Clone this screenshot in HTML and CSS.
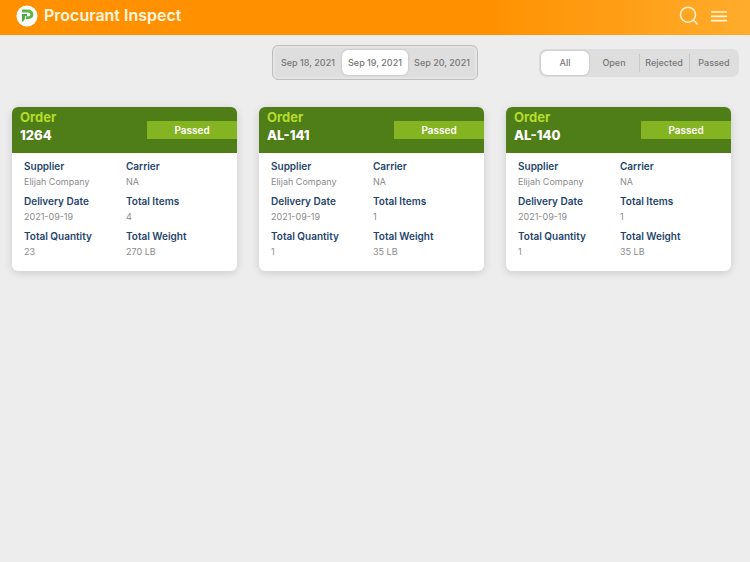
FILE: index.html
```html
<!DOCTYPE html>
<html lang="en">
<head>
  <meta charset="UTF-8">
  <meta name="viewport" content="width=device-width, initial-scale=1.0">
  <title>Procurant Inspect</title>
  <link rel="stylesheet" href="styles.css">
</head>
<body>
  <header class="topbar">
    <svg class="logo" viewBox="0 0 22 22" aria-hidden="true">
      <circle cx="11" cy="11" r="10.5" fill="#fff"/>
      <path d="M6 6H12C17.2 6 17.2 12.8 12 12.8H10" fill="none" stroke="#5cb648" stroke-width="3"/>
      <path d="M6 9H11V11H9L8.8 14.6L6 17.2Z" fill="#4cab47"/>
    </svg>
    <h1 class="title">Procurant Inspect</h1>
    <button class="icon-button" type="button" aria-label="Search">
      <svg width="20" height="20" viewBox="0 0 20 20" fill="none" stroke="#fff3d6" stroke-width="1.5" stroke-linecap="round">
        <circle cx="9" cy="8.7" r="7.5"/>
        <path d="M14.3 14L18.3 18"/>
      </svg>
    </button>
    <button class="icon-button" type="button" aria-label="Menu">
      <svg width="20" height="20" viewBox="0 0 20 20" fill="none" stroke="#fff3d6" stroke-width="1.7">
        <path d="M2 6H18M2 10.3H18M2 14.6H18"/>
      </svg>
    </button>
  </header>

  <div class="toolbar">
    <div class="segments dates">
      <button type="button">Sep 18, 2021</button>
      <button type="button" class="active">Sep 19, 2021</button>
      <button type="button">Sep 20, 2021</button>
    </div>
    <div class="segments filters">
      <button type="button" class="active">All</button>
      <button type="button">Open</button>
      <button type="button" class="divided">Rejected</button>
      <button type="button" class="divided">Passed</button>
    </div>
  </div>

  <main class="orders">
    <article class="card">
      <div class="card-header">
        <h2><span class="label">Order</span>1264</h2>
        <span class="status">Passed</span>
      </div>
      <dl class="details">
        <div><dt>Supplier</dt><dd>Elijah Company</dd></div>
        <div><dt>Carrier</dt><dd>NA</dd></div>
        <div><dt>Delivery Date</dt><dd>2021-09-19</dd></div>
        <div><dt>Total Items</dt><dd>4</dd></div>
        <div><dt>Total Quantity</dt><dd>23</dd></div>
        <div><dt>Total Weight</dt><dd>270 LB</dd></div>
      </dl>
    </article>

    <article class="card">
      <div class="card-header">
        <h2><span class="label">Order</span>AL-141</h2>
        <span class="status">Passed</span>
      </div>
      <dl class="details">
        <div><dt>Supplier</dt><dd>Elijah Company</dd></div>
        <div><dt>Carrier</dt><dd>NA</dd></div>
        <div><dt>Delivery Date</dt><dd>2021-09-19</dd></div>
        <div><dt>Total Items</dt><dd>1</dd></div>
        <div><dt>Total Quantity</dt><dd>1</dd></div>
        <div><dt>Total Weight</dt><dd>35 LB</dd></div>
      </dl>
    </article>

    <article class="card">
      <div class="card-header">
        <h2><span class="label">Order</span>AL-140</h2>
        <span class="status">Passed</span>
      </div>
      <dl class="details">
        <div><dt>Supplier</dt><dd>Elijah Company</dd></div>
        <div><dt>Carrier</dt><dd>NA</dd></div>
        <div><dt>Delivery Date</dt><dd>2021-09-19</dd></div>
        <div><dt>Total Items</dt><dd>1</dd></div>
        <div><dt>Total Quantity</dt><dd>1</dd></div>
        <div><dt>Total Weight</dt><dd>35 LB</dd></div>
      </dl>
    </article>
  </main>
</body>
</html>
```

FILE: styles.css
```css
* { box-sizing: border-box; }
body { margin: 0; background: #ededed; font-family: Inter, "Liberation Sans", sans-serif; }
h1, h2, dl, dd { margin: 0; }
button { margin: 0; padding: 0; border: none; background: none; font-family: inherit; cursor: pointer; }

/* top bar */
.topbar { display: flex; align-items: center; gap: 10px; height: 35px; padding: 0 21px 4px 16px; background: linear-gradient(90deg, #ff9100 65%, #ffac2c); }
.logo { width: 22px; height: 22px; margin-right: -4px; }
.title { flex: 1; padding-bottom: 2px; color: #fff6e0; font-size: 16px; font-weight: 600; line-height: 20px; }
.icon-button { display: flex; }

/* date and status pickers */
.toolbar { display: grid; grid-template-columns: 1fr auto 1fr; align-items: center; padding: 10px 11px 27px; }
.segments { display: flex; background: #dedede; color: #777; }
.segments button { color: inherit; font-size: 9px; font-weight: 500; line-height: 12px; white-space: nowrap; }
.segments .active { background: #fff; border-radius: 6px; box-shadow: 0 0 2px #aaa; }
.dates { grid-column: 2; height: 35px; padding: 4px 1px; border: 1px solid #bebebe; border-radius: 6px; box-shadow: inset 0 0 0 2px #e4e4e4; }
.dates button { width: 68px; }
.dates .active { width: 66px; }
.filters { justify-self: end; height: 28px; padding: 2px 0 2px 2px; border-radius: 7px; }
.filters button { width: 50px; }
.filters .active { width: 48px; }
.filters .divided { background: linear-gradient(#c6c6c6, #c6c6c6) left center / 1px 18px no-repeat; }

/* order cards */
.orders { display: grid; grid-template-columns: repeat(3, 1fr); gap: 22px; padding: 0 19px 20px 12px; }
.card { overflow: hidden; border-radius: 6px; background: #fff; box-shadow: 0 2px 8px rgba(0,0,0,0.14); }
.card-header { display: flex; align-items: center; justify-content: space-between; height: 46px; padding-left: 8px; background: #4f7d17; }
.card-header h2 { color: #fff; font-size: 13px; font-weight: 800; line-height: 18px; padding-bottom: 8px; }
.card-header .label { display: block; color: #b5dc2b; font-weight: 700; }
.status { width: 90px; background: #85b423; color: #fff; font-size: 10px; font-weight: 600; line-height: 18px; text-align: center; }
.details { display: grid; grid-template-columns: 102px 1fr; row-gap: 3px; padding: 5px 12px 11px; }
.details dt { color: #1f456c; font-size: 10px; font-weight: 600; line-height: 16px; }
.details dd { color: #8b8b8b; font-size: 9px; line-height: 16px; }
```
